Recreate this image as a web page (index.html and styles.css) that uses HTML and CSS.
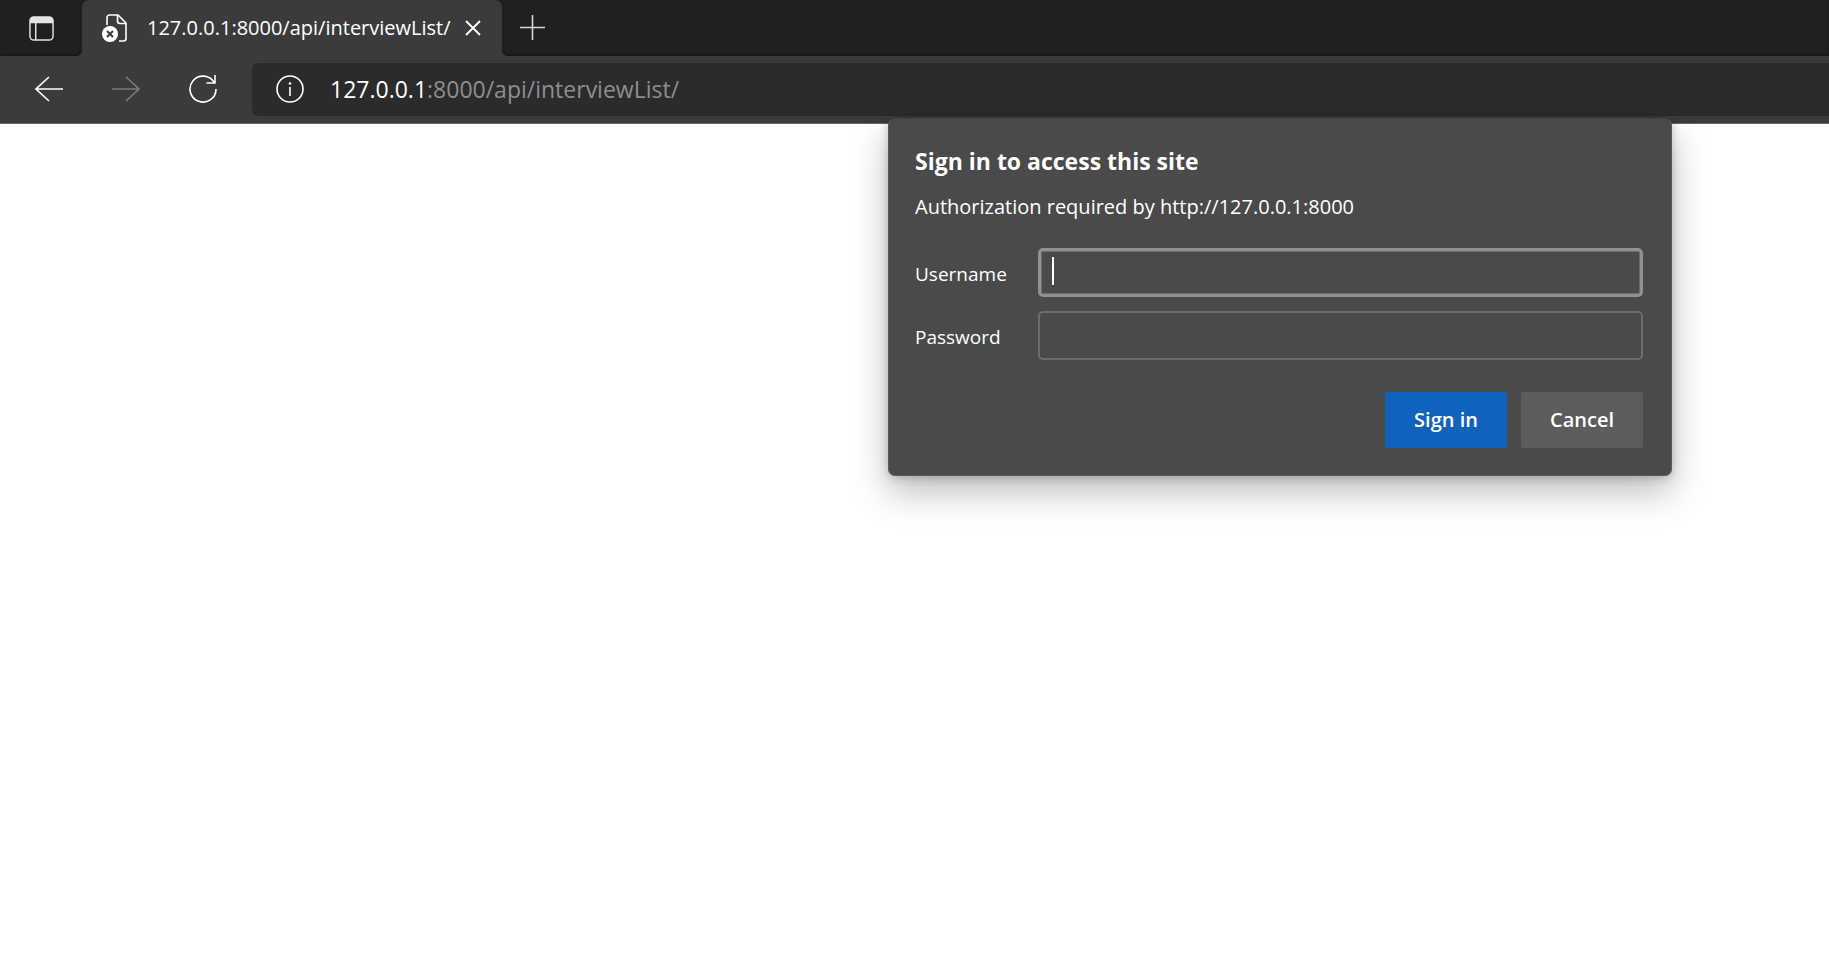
FILE: index.html
```html
<!DOCTYPE html>
<html lang="en">
<head>
<meta charset="utf-8">
<title>127.0.0.1:8000/api/interviewList/</title>
<link rel="stylesheet" href="styles.css">
</head>
<body>
<header class="browser">
  <div class="tab-strip">
    <div class="strip-start">
      <button class="icon-button" type="button" aria-label="Tab actions">
        <svg width="25" height="25" viewBox="0 0 26 26" fill="none" stroke="#e4e4e4" stroke-width="1.5">
          <rect x="1" y="1" width="24" height="24" rx="4"/>
          <path d="M1 7.5V5a4 4 0 0 1 4-4h16a4 4 0 0 1 4 4v2.500z" fill="#e4e4e4" stroke="none"/>
          <path d="M7 7v18"/>
        </svg>
      </button>
    </div>
    <div class="tab-slot">
      <div class="tab">
        <svg class="tab-icon" width="26" height="28" viewBox="0 0 26 28" fill="none" stroke="#fff" stroke-width="1.600">
          <path d="M5 11V3.500A2.500 2.500 0 0 1 7.500 1H16l8 8v15.500a2.500 2.500 0 0 1-2.500 2.500H17"/>
          <path d="M15.500 1v6a2.500 2.500 0 0 0 2.500 2.500h6"/>
          <circle cx="8" cy="20" r="8" fill="#fff" stroke="none"/>
          <path d="M5 17l6 6M11 17l-6 6" stroke="#3b3b3b" stroke-width="2"/>
        </svg>
        <span class="tab-title">127.0.0.1:8000/api/interviewList/</span>
        <button class="icon-button" type="button" aria-label="Close tab">
          <svg width="16" height="16" viewBox="0 0 16 16" fill="none" stroke="#fff" stroke-width="1.800"><path d="M1 1l14 14M15 1L1 15"/></svg>
        </button>
      </div>
    </div>
    <div class="strip-end">
      <button class="icon-button" type="button" aria-label="New tab">
        <svg width="25" height="25" viewBox="0 0 25 25" fill="none" stroke="#d8d8d8" stroke-width="1.600"><path d="M12.500 0v25M0 12.500h25"/></svg>
      </button>
    </div>
  </div>
  <div class="toolbar">
    <nav class="nav-buttons">
      <button class="icon-button" type="button" aria-label="Back">
        <svg width="28" height="26" viewBox="0 0 28 26" fill="none" stroke="#fff" stroke-width="1.600"><path d="M28 13H1M14 1L1 13l13 12"/></svg>
      </button>
      <button class="icon-button" type="button" aria-label="Forward" disabled>
        <svg width="28" height="26" viewBox="0 0 28 26" fill="none" stroke="#7c7c7c" stroke-width="1.600"><path d="M0 13h27M14 1l13 12-13 12"/></svg>
      </button>
      <button class="icon-button" type="button" aria-label="Refresh">
        <svg width="28" height="28" viewBox="0 0 28 28" fill="none" stroke="#fff" stroke-width="1.600"><path d="M25.200 7.500A13 13 0 1 0 27 14M26 0v8h-8.500"/></svg>
      </button>
    </nav>
    <div class="address">
      <svg width="28" height="28" viewBox="0 0 28 28" fill="none" stroke="#fff" stroke-width="1.600"><circle cx="14" cy="14" r="13"/><path d="M14 12v9"/><circle cx="14" cy="8.500" r="1.300" fill="#fff" stroke="none"/></svg>
      <span class="url"><span class="host">127.0.0.1</span>:8000/api/interviewList/</span>
    </div>
  </div>
</header>
<main class="page">
  <form class="dialog" role="dialog" aria-labelledby="dialog-title">
    <h1 class="dialog-title" id="dialog-title">Sign in to access this site</h1>
    <p class="dialog-text">Authorization required by http://127.0.0.1:8000</p>
    <div class="fields">
      <label for="username">Username</label>
      <div class="field-wrap">
        <input class="field active" id="username" type="text" autocomplete="off">
        <span class="caret"></span>
      </div>
      <label for="password">Password</label>
      <input class="field" id="password" type="password" autocomplete="off">
    </div>
    <div class="actions">
      <button class="button primary" type="submit">Sign in</button>
      <button class="button" type="button">Cancel</button>
    </div>
  </form>
</main>
</body>
</html>
```
FILE: styles.css
```css
* { box-sizing: border-box; }

body {
  margin: 0;
  min-height: 100vh;
  display: flex;
  flex-direction: column;
  background: #fff;
  color: #fff;
  font: 20px/28px "Open Sans", "Noto Sans", sans-serif;
  overflow: hidden;
}

svg { display: block; flex: none; }

.browser {
  background: #3b3b3b;
  border-bottom: 1px solid #6c6868;
}

.icon-button {
  padding: 0;
  border: 0;
  background: none;
}

.tab-strip { display: flex; height: 56px; }

.strip-start,
.strip-end {
  display: flex;
  align-items: center;
  background: #202020;
  box-shadow: inset 0 -2px 2px #1a1a1a;
}

.strip-start {
  width: 82px;
  padding-left: 29px;
  border-bottom-right-radius: 6px;
}

.strip-end {
  flex: 1;
  padding: 0 0 2px 18px;
  border-bottom-left-radius: 6px;
}

.tab-slot {
  width: 420px;
  background: linear-gradient(#202020 50%, #3b3b3b 50%);
}

.tab {
  display: flex;
  align-items: center;
  height: 100%;
  padding: 0 21px 0 20px;
  border-radius: 7px 7px 0 0;
  background: #3b3b3b;
}

.tab-title {
  flex: 1;
  margin-left: 19px;
  white-space: nowrap;
}

.toolbar { display: flex; padding: 7px 0; }

.nav-buttons {
  display: flex;
  align-items: center;
  gap: 49px;
  width: 252px;
  padding: 0 0 2px 35px;
}

.address {
  display: flex;
  flex: 1;
  align-items: center;
  gap: 26px;
  height: 53px;
  padding: 0 0 2px 24px;
  border-radius: 6px 0 0 6px;
  background: #2b2b2b;
}

.url { color: #8e8e8e; font-size: 23px; }
.host { color: #fff; }

.page { position: relative; flex: 1; }

.dialog {
  position: absolute;
  top: -6px;
  right: 157px;
  width: 784px;
  padding: 26px 28px 27px 26px;
  border: 1px solid #5a5a5a;
  border-top-color: #424242;
  border-radius: 7px;
  background: #4a4a4a;
  box-shadow: 0 16px 36px rgba(0, 0, 0, .26), 0 2px 10px rgba(0, 0, 0, .2);
}

.dialog-title { margin: 0; font-size: 23px; line-height: 32px; }
.dialog-text { margin: 16px 0 27px; }

.fields {
  display: grid;
  grid-template-columns: 123px 1fr;
  align-items: center;
  gap: 14px 0;
}

.fields label { padding-top: 2px; font-size: 19px; }

.field-wrap { position: relative; }

.field {
  display: block;
  width: 100%;
  height: 49px;
  padding: 0 12px;
  border: 2px solid #6c6c6c;
  border-radius: 5px;
  background: transparent;
  color: #fff;
  font: inherit;
}

.field.active {
  border: 3px solid #919191;
  box-shadow: inset 0 0 0 1px #6c6c6c;
}

.field:focus { outline: none; }

.caret {
  position: absolute;
  top: 9px;
  left: 14px;
  width: 2px;
  height: 28px;
  background: #fff;
}

.field:focus + .caret { display: none; }

.actions {
  display: flex;
  justify-content: flex-end;
  gap: 14px;
  margin-top: 32px;
}

.button {
  width: 122px;
  height: 56px;
  padding: 0;
  border: 0;
  border-radius: 2px;
  background: #5c5c5c;
  color: #fff;
  font: 600 20px/28px "Open Sans", "Noto Sans", sans-serif;
}

.primary { background: #1062bc; }
```
